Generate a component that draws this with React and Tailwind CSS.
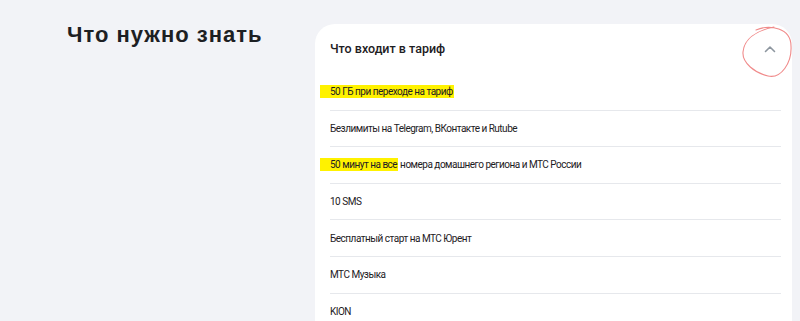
import React from 'react'

const items = [
    { text: '50 ГБ при переходе на тариф', mark: '50 ГБ при переходе на тариф', rest: '' },
    { text: 'Безлимиты на Telegram, ВКонтакте и Rutube' },
    { text: '50 минут на все номера домашнего региона и МТС России', mark: '50 минут на все', rest: ' номера домашнего региона и МТС России' },
    { text: '10 SMS' },
    { text: 'Бесплатный старт на МТС Юрент' },
    { text: 'МТС Музыка' },
    { text: 'KION' },
]

const Row = ({ item }) => {
    return (
        <li className="h-[36.6px] flex items-center border-b border-[#e6e8ec] text-[10px] tracking-[-0.5px] text-[#1d2023]">
            {item.mark ? (
                <span>
                    <span className="bg-[#fff200] -ml-[10px] pl-[10px] pr-[1px] py-[1px]">{item.mark}</span>
                    {item.rest}
                </span>
            ) : (
                <span>{item.text}</span>
            )}
        </li>
    )
}

const App = () => {
    return (
        <div className="relative w-[800px] h-[321px] overflow-hidden bg-[#f2f3f7]" style={{ fontFamily: 'Roboto, "Liberation Sans", sans-serif' }}>
            <div className="flex pt-6">
                <div className="w-[315px] pl-[67px]">
                    <h2 className="text-[22px] leading-[22px] font-bold tracking-[1px] text-[#1d2023]" style={{ fontFamily: '"Liberation Sans", Arial, sans-serif' }}>
                        Что нужно знать
                    </h2>
                </div>
                <div className="w-[477px] bg-white rounded-[20px] pl-[15px] pr-[11px] pb-12">
                    <div className="h-[50px] flex items-center justify-between pr-[3px]">
                        <span className="text-[12.5px] font-medium text-[#1d2023]">Что входит в тариф</span>
                        <svg width="12" height="8" viewBox="0 0 12 8" fill="none" className="mr-[2px]">
                            <path d="M1.5 6.5 L6 2 L10.5 6.5" stroke="#8d969f" strokeWidth="1.6" strokeLinecap="round" strokeLinejoin="round" />
                        </svg>
                    </div>
                    <ul>
                        {items.map((item, i) => (
                            <Row key={i} item={item} />
                        ))}
                    </ul>
                </div>
            </div>

            {/* hand drawn marker around the chevron */}
            <svg className="absolute top-0 left-0 pointer-events-none" width="800" height="321" viewBox="0 0 800 321" fill="none">
                <path d="M756 30 C770 24, 791 28, 791 46 C792 63, 781 79, 768 76 C755 73, 742 63, 743 52 C744 40, 755 31, 774 27" stroke="#f08a8a" strokeWidth="1.1" strokeLinecap="round" />
            </svg>
        </div>
    )
}

export default App
